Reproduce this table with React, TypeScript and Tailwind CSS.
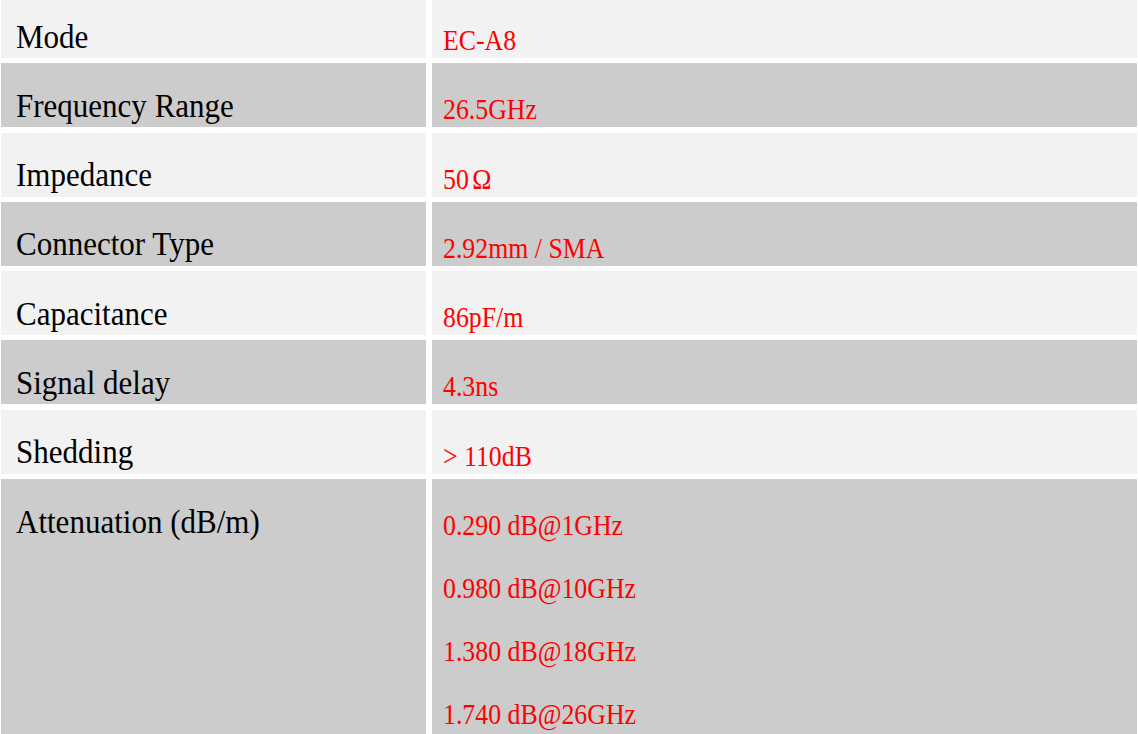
import React from "react";

const rows: { label: string; values: React.ReactNode[] }[] = [
  { label: "Mode", values: ["EC-A8"] },
  { label: "Frequency Range", values: ["26.5GHz"] },
  {
    label: "Impedance",
    values: [
      <>
        50<span className="ml-[4px]">Ω</span>
      </>,
    ],
  },
  { label: "Connector Type", values: ["2.92mm / SMA"] },
  { label: "Capacitance", values: ["86pF/m"] },
  { label: "Signal delay", values: ["4.3ns"] },
  { label: "Shedding", values: ["> 110dB"] },
  {
    label: "Attenuation (dB/m)",
    values: ["0.290 dB@1GHz", "0.980 dB@10GHz", "1.380 dB@18GHz", "1.740 dB@26GHz"],
  },
];

export default function App() {
  return (
    <div className="w-[1138px] bg-white overflow-hidden" style={{ fontFamily: '"Liberation Serif", "Times New Roman", serif' }}>
      <div className="-mt-[6px] grid grid-cols-[425px_705px] gap-x-[6px] gap-y-[5.3px] px-[1px]">
        {rows.map((r, i) => {
          const bg = i % 2 === 0 ? "bg-[#f2f2f2]" : "bg-[#cccccc]";
          const last = r.values.length > 1;
          return (
            <React.Fragment key={r.label}>
              <div className={`${bg} ${last ? "min-h-[270px]" : "h-[64px]"} pl-[15px] pt-[24.5px]`}>
                <div className="inline-block origin-left scale-x-[0.912] text-[34px] leading-[36px] text-black whitespace-nowrap">{r.label}</div>
              </div>
              <div className={`${bg} ${last ? "min-h-[270px]" : "h-[64px]"} pl-[11px] pt-[30px] flex flex-col items-start gap-[31px]`}>
                {r.values.map((v, j) => (
                  <div key={j} className="inline-block origin-left scale-x-[0.875] text-[29.5px] leading-[32px] text-[#ff0000] whitespace-pre">{v}</div>
                ))}
              </div>
            </React.Fragment>
          );
        })}
      </div>
    </div>
  );
}
